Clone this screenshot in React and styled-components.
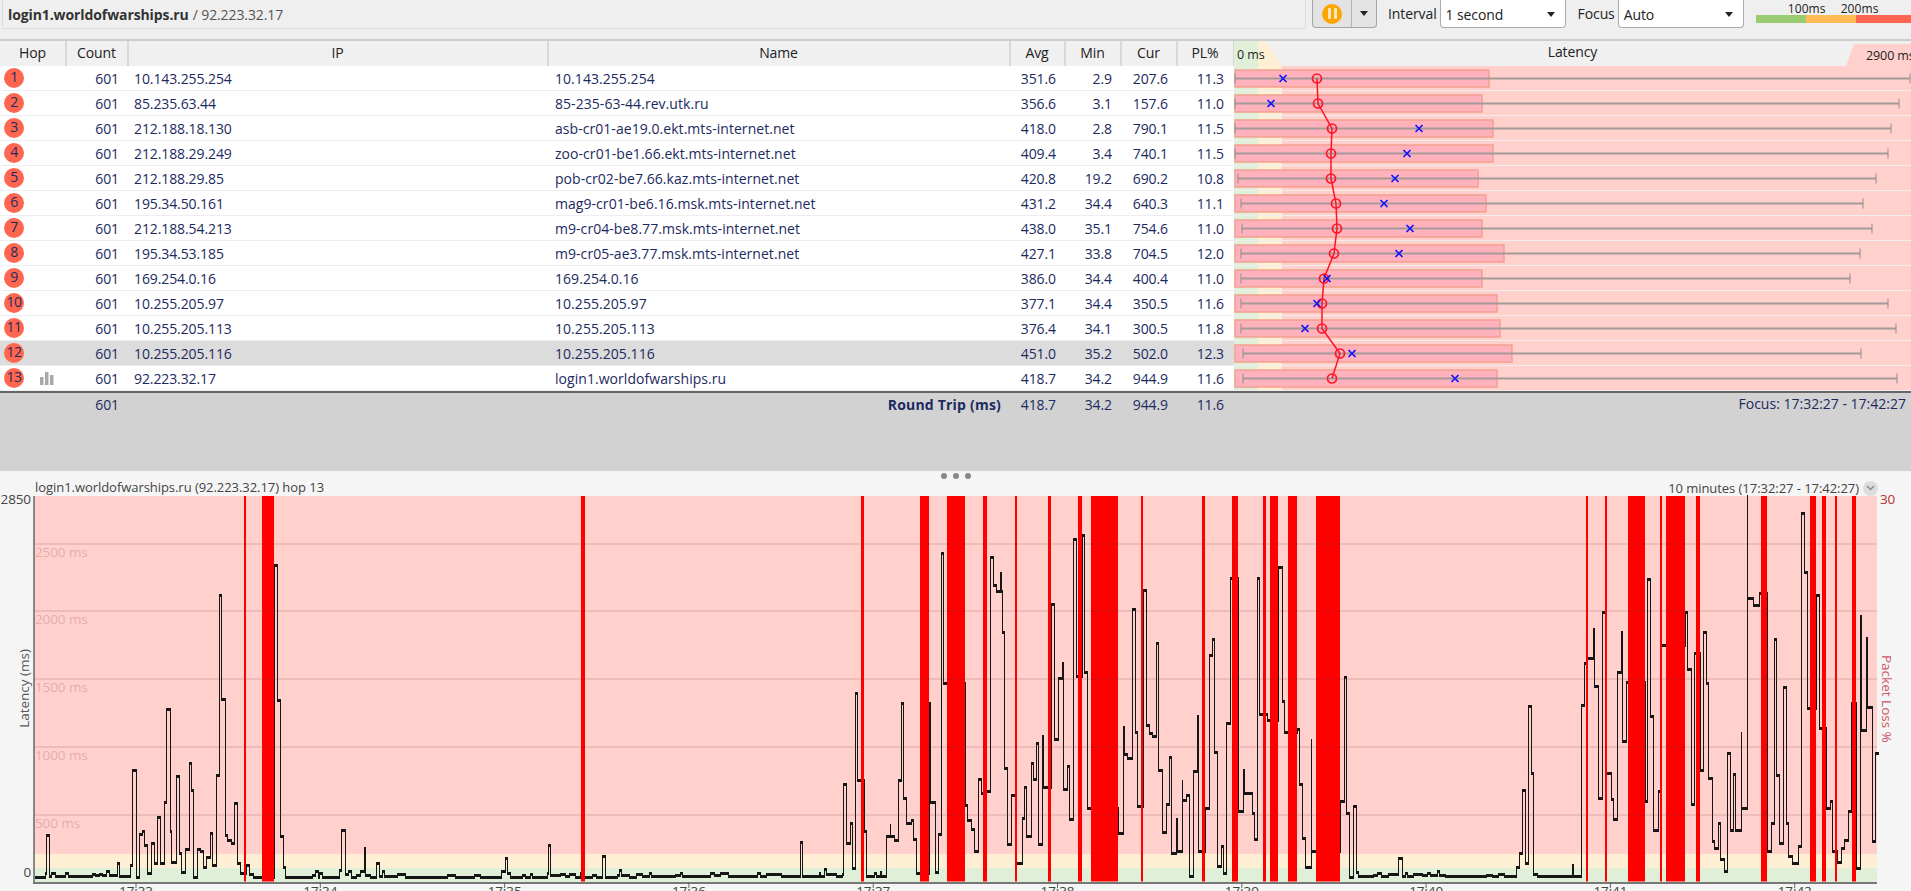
import styled, {createGlobalStyle} from 'styled-components';

const GlobalStyle = createGlobalStyle`
  html, body {
    margin: 0;
    height: 100%;
    overflow: hidden;
    background: #efefef;
  }
  body {
    font-family: "Open Sans", "Liberation Sans", sans-serif;
    font-size: 14px;
    letter-spacing: -0.1px;
  }
`;

const COLS = '66px 62px 420px 462px 55px 56px 56px 57px 1fr';
const PLOT_W = 677;
const CHART_W = 1843;
const CHART_H = 386;

const HOPS = [
  {ip: '10.143.255.254', name: '10.143.255.254', avg: '351.6', min: '2.9', cur: '207.6', pl: '11.3', box: 1489, dot: 1317, x: 1283, lo: 1235, hi: 1910},
  {ip: '85.235.63.44', name: '85-235-63-44.rev.utk.ru', avg: '356.6', min: '3.1', cur: '157.6', pl: '11.0', box: 1482, dot: 1318, x: 1271, lo: 1235, hi: 1899},
  {ip: '212.188.18.130', name: 'asb-cr01-ae19.0.ekt.mts-internet.net', avg: '418.0', min: '2.8', cur: '790.1', pl: '11.5', box: 1493, dot: 1332, x: 1419, lo: 1235, hi: 1891},
  {ip: '212.188.29.249', name: 'zoo-cr01-be1.66.ekt.mts-internet.net', avg: '409.4', min: '3.4', cur: '740.1', pl: '11.5', box: 1493, dot: 1331, x: 1407, lo: 1235, hi: 1888},
  {ip: '212.188.29.85', name: 'pob-cr02-be7.66.kaz.mts-internet.net', avg: '420.8', min: '19.2', cur: '690.2', pl: '10.8', box: 1478, dot: 1331, x: 1395, lo: 1238, hi: 1876},
  {ip: '195.34.50.161', name: 'mag9-cr01-be6.16.msk.mts-internet.net', avg: '431.2', min: '34.4', cur: '640.3', pl: '11.1', box: 1486, dot: 1336, x: 1384, lo: 1241, hi: 1863},
  {ip: '212.188.54.213', name: 'm9-cr04-be8.77.msk.mts-internet.net', avg: '438.0', min: '35.1', cur: '754.6', pl: '11.0', box: 1482, dot: 1337, x: 1410, lo: 1242, hi: 1872},
  {ip: '195.34.53.185', name: 'm9-cr05-ae3.77.msk.mts-internet.net', avg: '427.1', min: '33.8', cur: '704.5', pl: '12.0', box: 1504, dot: 1334, x: 1399, lo: 1241, hi: 1860},
  {ip: '169.254.0.16', name: '169.254.0.16', avg: '386.0', min: '34.4', cur: '400.4', pl: '11.0', box: 1482, dot: 1324, x: 1327, lo: 1241, hi: 1850},
  {ip: '10.255.205.97', name: '10.255.205.97', avg: '377.1', min: '34.4', cur: '350.5', pl: '11.6', box: 1497, dot: 1322, x: 1317, lo: 1241, hi: 1888},
  {ip: '10.255.205.113', name: '10.255.205.113', avg: '376.4', min: '34.1', cur: '300.5', pl: '11.8', box: 1500, dot: 1322, x: 1305, lo: 1241, hi: 1896},
  {ip: '10.255.205.116', name: '10.255.205.116', avg: '451.0', min: '35.2', cur: '502.0', pl: '12.3', box: 1512, dot: 1340, x: 1352, lo: 1243, hi: 1861},
  {ip: '92.223.32.17', name: 'login1.worldofwarships.ru', avg: '418.7', min: '34.2', cur: '944.9', pl: '11.6', box: 1497, dot: 1332, x: 1455, lo: 1243, hi: 1897},
];

// packet loss bars, page x from / to
const LOSS = [
  [244, 246], [262, 274], [581, 585], [861, 864], [920, 929], [947, 965], [983, 987], [1015, 1017],
  [1048, 1051], [1078, 1082], [1091, 1118], [1141, 1143], [1202, 1205], [1232, 1238], [1263, 1266],
  [1270, 1278], [1288, 1297], [1316, 1340], [1586, 1588], [1605, 1607], [1628, 1645], [1660, 1662],
  [1666, 1685], [1696, 1700], [1761, 1767], [1810, 1816], [1822, 1826], [1835, 1837], [1852, 1856],
];

// latency trace read off the capture in three stretches, each with its own x scale
const STRETCHES = [
  {
    scale: 2.529,
    from: 0,
    pts: [
      88, 1190, 115, 1180, 117, 1065, 125, 1188, 130, 1180, 140, 1188, 165, 1180, 172, 1188, 232, 1182, 240, 1186,
      250, 1182, 258, 1186, 268, 1172, 275, 1186, 296, 1150, 301, 1188, 330, 1155, 335, 870, 343, 1190, 352, 1062,
      360, 1052, 365, 1095, 373, 1180, 383, 1090, 390, 1150, 398, 1012, 404, 1150, 415, 965, 421, 687, 429, 1052,
      433, 1145, 446, 888, 452, 1120, 459, 1175, 467, 1108, 478, 850, 483, 930, 488, 1192, 499, 1106, 506, 1112,
      513, 1160, 522, 1132, 532, 1058, 535, 1155, 547, 885, 554, 345, 560, 657, 568, 1065, 575, 1080, 583, 1088,
      593, 970, 599, 1150, 606, 1180, 622, 1155, 630, 1182, 640, 1190, 693, 255, 700, 660, 707, 1068, 715, 1160,
      722, 1190, 790, 1185, 797, 1172, 803, 1190, 808, 1180, 815, 1190, 858, 1170, 863, 1050, 872, 1182, 880, 1172,
      887, 1190, 900, 1185, 910, 1172, 921, 1105, 924, 1185, 935, 1190, 952, 1150, 958, 1188, 965, 1172, 972, 1188,
      1005, 1183, 1025, 1190, 1130, 1186, 1150, 1190, 1200, 1186, 1215, 1190, 1268, 1172, 1278, 1135, 1282, 1180,
      1290, 1190, 1320, 1185, 1328, 1190, 1340, 1182, 1345, 1190, 1383, 1178, 1385, 1094, 1392, 1185, 1417, 1182,
      1428, 1188, 1438, 1182, 1455, 1190, 1468, 1180, 1475, 1190, 1497, 1185, 1507, 1190,
    ],
  },
  {
    scale: 2.376,
    from: 600,
    pts: [
      5, 1127, 13, 1190, 40, 1185, 46, 1170, 49, 1185, 70, 1190, 85, 1182, 100, 1188, 117, 1180, 122, 1188, 178, 1185,
      190, 1178, 195, 1188, 262, 1178, 270, 1185, 285, 1178, 303, 1188, 373, 1180, 380, 1188, 395, 1182, 430, 1188,
      476, 1087, 480, 1188, 520, 1180, 522, 1188, 533, 1168, 538, 1182, 560, 1188, 575, 1182, 577, 912, 584, 1090,
      593, 1028, 598, 1165, 606, 638, 610, 900, 628, 1052, 633, 1188, 652, 1180, 655, 1188, 665, 1175, 668, 1188,
      680, 1068, 688, 1035, 690, 1068, 698, 1080, 708, 900, 716, 670, 720, 955, 728, 1030, 738, 1020, 744, 1078,
      750, 1178, 782, 670, 785, 965, 795, 1175, 803, 1062, 811, 218, 816, 608, 867, 975, 873, 1020, 881, 1048,
      888, 1112, 897, 897, 905, 938, 918, 932, 927, 230, 933, 315, 940, 332, 951, 278, 953, 332, 955, 455, 960, 865,
      968, 1092, 977, 945, 985, 1148, 1002, 1015, 1007, 922, 1013, 1068, 1023, 848, 1028, 897, 1037, 788, 1040, 1092,
      1050, 767, 1053, 920, 1072, 372, 1078, 777, 1088, 595, 1097, 548, 1099, 927, 1110, 857, 1114, 1017, 1125, 178,
      1130, 588, 1146, 165, 1150, 575, 1158, 985, 1231, 1058, 1242, 742, 1245, 822, 1253, 833, 1263, 387, 1270, 755,
      1275, 978, 1290, 330, 1297, 735, 1305, 760, 1312, 768, 1322, 488, 1325, 870, 1335, 1055, 1344, 972, 1352, 832,
      1356, 1118, 1368, 1018, 1370, 1113, 1382, 902, 1384, 960, 1393, 945, 1400, 1188, 1408, 872, 1418, 707, 1420, 1113,
      1438, 983, 1446, 525, 1453, 477, 1458, 815, 1465, 1157, 1475, 1097, 1480, 1178, 1488, 728, 1498, 293, 1516, 993,
      1527, 870, 1531, 940, 1548, 1000, 1553, 1077,
    ],
  },
  {
    scale: 2.337,
    from: 1240,
    pts: [
      40, 295, 44, 703, 62, 720, 89, 262, 97, 662, 103, 755, 133, 748, 138, 912, 146, 1073, 153, 1160, 165, 780,
      167, 1113, 234, 963, 243, 592, 247, 1000, 255, 1190, 263, 977, 270, 1175, 275, 1188, 310, 1185, 320, 1180, 330, 1188,
      345, 1182, 370, 1133, 378, 1188, 385, 1180, 390, 1188, 405, 1182, 425, 1185, 437, 1180, 445, 1184, 460, 1172,
      465, 1185, 480, 1188, 575, 1184, 590, 1188, 603, 1182, 618, 1188, 645, 1160, 652, 1120, 659, 930, 666, 1148,
      672, 678, 680, 880, 684, 1183, 695, 1188, 775, 1155, 778, 1188, 797, 675, 804, 550, 810, 533, 825, 448, 828, 617,
      836, 955, 845, 395, 853, 878, 866, 958, 871, 1017, 882, 575, 890, 457, 892, 782, 903, 607, 946, 963, 952, 298,
      959, 708, 965, 1050, 976, 932, 985, 495, 1040, 397, 1044, 567, 1053, 972, 1061, 520, 1075, 870, 1082, 455,
      1088, 610, 1093, 893, 1102, 1082, 1108, 1103, 1118, 1030, 1122, 1138, 1130, 1172, 1139, 820, 1146, 1050, 1153, 883,
      1157, 1050, 1170, 760, 1172, 985, 1184, 48, 1185, 355, 1200, 375, 1212, 338, 1231, 1113, 1241, 1030, 1248, 478,
      1252, 885, 1260, 1088, 1268, 622, 1275, 1030, 1280, 1128, 1290, 1148, 1303, 1098, 1312, 100, 1318, 275, 1324, 685,
      1347, 345, 1353, 745, 1370, 985, 1378, 962, 1383, 1112, 1395, 1145, 1405, 1105, 1412, 1080, 1420, 992, 1427, 668,
      1440, 1165, 1450, 408, 1452, 750, 1464, 475, 1466, 680, 1476, 1083, 1485, 818, 1490, 818,
    ],
  },
];

const TRACE = STRETCHES.flatMap(({scale, from, pts}) => {
  const out = [];
  for (let i = 0; i < pts.length; i += 2) {
    out.push([Math.round(pts[i] / scale + from - 34) + 0.5, Math.round(pts[i + 1] / 3 - 16)]);
  }
  return out;
});

function tracePaths() {
  let flat = '';
  let steep = '';
  for (let i = 0; i < TRACE.length - 1; i++) {
    const [x, y] = TRACE[i];
    const [nx, ny] = TRACE[i + 1];
    flat += `M${x - 0.5} ${y}H${nx + 0.5}`;
    steep += `M${nx} ${y}V${ny}`;
  }
  return {flat, steep};
}

const GRID = [
  {y: 48, label: '2500 ms'},
  {y: 115, label: '2000 ms'},
  {y: 183, label: '1500 ms'},
  {y: 251, label: '1000 ms'},
  {y: 319, label: '500 ms'},
];

const MINUTES = ['17:33', '17:34', '17:35', '17:36', '17:37', '17:38', '17:39', '17:40', '17:41', '17:42'];

const Page = styled.div`
  width: 1911px;
  height: 891px;
  overflow: hidden;
  display: flex;
  flex-direction: column;
  background: #efefef;
  color: #222;
`;

const Toolbar = styled.div`
  display: flex;
  align-items: stretch;
  height: 29px;
  margin-bottom: 10px;
  flex: none;
`;

const TitleBox = styled.div`
  width: 1304px;
  margin-left: 2px;
  box-sizing: border-box;
  padding-left: 5px;
  display: flex;
  align-items: center;
  gap: 4px;
  border: 1px solid #ddd;
  border-top: none;
  color: #555;

  b {
    color: #333;
    font-weight: 700;
  }
`;

const PauseGroup = styled.div`
  display: flex;
  margin-left: 6px;
  width: 65px;
  height: 28px;
  box-sizing: border-box;
  border: 1px solid #a5a5a5;
  border-top: none;
  border-radius: 0 0 4px 4px;
  background: #e3e3e3;
`;

const PauseButton = styled.div`
  width: 38px;
  display: flex;
  align-items: center;
  justify-content: center;
  border-right: 1px solid #b5b5b5;
`;

const PauseDisc = styled.div`
  width: 20px;
  height: 20px;
  border-radius: 50%;
  background: #ffa500;
  display: flex;
  align-items: center;
  justify-content: center;
  gap: 3px;

  i {
    display: block;
    width: 3px;
    height: 11px;
    border-radius: 1px;
    background: #ffe9c0;
  }
`;

const CaretButton = styled.div`
  flex: 1;
  display: flex;
  align-items: center;
  justify-content: center;
`;

const Caret = styled.span`
  width: 0;
  height: 0;
  border-left: 4px solid transparent;
  border-right: 4px solid transparent;
  border-top: 5px solid #222;
`;

const FieldLabel = styled.span`
  display: flex;
  align-items: center;
  margin: 0 3px 2px ${props => props.$gap}px;
`;

const Dropdown = styled.div`
  width: ${props => props.$width}px;
  height: 28px;
  box-sizing: border-box;
  display: flex;
  align-items: center;
  justify-content: space-between;
  padding: 2px 10px 0 5px;
  background: #fff;
  border: 1px solid #aaa;
  border-top: none;
  border-radius: 0 0 4px 4px;
`;

const Legend = styled.div`
  margin-left: 12px;
  width: 155px;
  display: flex;
  flex-direction: column;
`;

const LegendLabels = styled.div`
  height: 15px;
  font-size: 12px;
  line-height: 17px;
  letter-spacing: 0.1px;
  padding-left: 32px;
  display: flex;
  gap: 15px;
`;

const LegendBar = styled.div`
  height: 8px;
  background: linear-gradient(to right, #99cc70 0 50px, #ffbb55 50px 100px, #ff6650 100px);
`;

const Table = styled.div`
  flex: none;
  border-top: 2px solid #ccc;
`;

const HeadRow = styled.div`
  display: grid;
  grid-template-columns: ${COLS};
  height: 25px;
  background: #f0f0f0;
`;

const HeadCell = styled.div`
  display: flex;
  align-items: center;
  justify-content: center;
  border-right: 2px solid #d8d8d8;
  margin-right: -1px;
  padding-bottom: 3px;
`;

const LatencyHead = styled.div`
  position: relative;
  text-align: center;
  line-height: 21px;
`;

const RangeTag = styled.span`
  position: absolute;
  top: ${props => props.$top}px;
  bottom: 0;
  font-size: 12.5px;
`;

const MinTag = styled(RangeTag)`
  left: 0;
  width: 48px;
  padding-left: 3px;
  box-sizing: border-box;
  text-align: left;
  line-height: 28px;
  background: linear-gradient(to right, #e0f0d8 0 24px, #fdeed4 24px);
  clip-path: polygon(0 0, 32px 0, 100% 100%, 0 100%);
`;

const MaxTag = styled(RangeTag)`
  right: 0;
  width: 65px;
  padding-left: 20px;
  box-sizing: border-box;
  text-align: left;
  white-space: nowrap;
  line-height: 23px;
  background: #ffd0cc;
  clip-path: polygon(8px 0, 100% 0, 100% 100%, 0 100%);
`;

const Body = styled.div`
  position: relative;
`;

const Row = styled.div`
  display: grid;
  grid-template-columns: ${COLS};
  height: 25px;
  box-sizing: border-box;
  border-bottom: 1px solid #eee;
  background: ${props => (props.$active ? '#dcdcdc' : '#fff')};
  color: #1c2a60;
`;

const HopCell = styled.div`
  display: flex;
  align-items: center;
  padding-left: 4px;
  gap: 16px;
`;

const HopBadge = styled.span`
  width: 20px;
  height: 20px;
  border-radius: 50%;
  background: #ff6650;
  display: flex;
  align-items: center;
  justify-content: center;
  letter-spacing: -0.5px;
  padding-bottom: 3px;
  box-sizing: border-box;
`;

const NumCell = styled.div`
  display: flex;
  align-items: center;
  justify-content: flex-end;
  padding-right: ${props => props.$pad || 9}px;
  font-weight: ${props => (props.$bold ? 700 : 400)};
  letter-spacing: ${props => (props.$bold ? '0.2px' : 'inherit')};
`;

const TextCell = styled.div`
  display: flex;
  align-items: center;
  padding-left: ${props => props.$pad}px;
  letter-spacing: ${props => props.$track || 'inherit'};
`;

const Zones = styled.div`
  background: linear-gradient(to right, #e0f0d8 0 24px, #fff0d4 24px 48px, #ffd0cc 48px);
  height: 24px;
`;

const Plot = styled.svg`
  position: absolute;
  top: 0;
  right: 0;
  width: ${PLOT_W}px;
  height: 325px;
  pointer-events: none;
`;

const TotalArea = styled.div`
  flex: none;
  height: 78px;
  border-top: 2px solid #666;
  background: #d2d2d2;
  color: #1c2a60;
`;

const TotalRow = styled.div`
  display: grid;
  grid-template-columns: 66px 62px 882px 55px 56px 56px 57px 1fr;
  height: 22px;
`;

const FocusNote = styled.div`
  text-align: right;
  padding-right: 5px;
  line-height: 21px;
  letter-spacing: 0;
`;

const Lower = styled.div`
  flex: 1;
  background: #f5f5f5;
  display: flex;
  flex-direction: column;
`;

const Handle = styled.div`
  height: 9px;
  padding-top: 1px;
  box-sizing: border-box;
  display: flex;
  justify-content: center;
  align-items: center;
  gap: 6px;

  i {
    width: 6px;
    height: 6px;
    border-radius: 50%;
    background: #888;
  }
`;

const ChartHead = styled.div`
  height: 16px;
  line-height: 15px;
  margin: 0 0 0 35px;
  width: 1842px;
  display: flex;
  justify-content: space-between;
  color: #444;
  font-size: 13px;
  letter-spacing: -0.05px;
`;

const RangePick = styled.div`
  display: flex;
  align-items: center;
  gap: 4px;
`;

const RoundChevron = styled.span`
  width: 15px;
  height: 15px;
  margin-right: -1px;
  border-radius: 50%;
  background: #ddd;
  color: #888;
  display: flex;
  align-items: center;
  justify-content: center;
`;

const ChartRow = styled.div`
  display: grid;
  grid-template-columns: 34px ${CHART_W}px 34px;
`;

const AxisColumn = styled.div`
  height: ${CHART_H}px;
  display: flex;
  flex-direction: column;
  justify-content: space-between;
  align-items: ${props => (props.$right ? 'flex-start' : 'flex-end')};
  padding: ${props => (props.$right ? '0 0 0 3px' : '0 3px 0 0')};
  color: ${props => (props.$right ? '#c03030' : '#444')};
  line-height: 14px;
  font-size: 13.5px;
`;

const AxisTop = styled.span`
  margin-top: -4px;
`;

const AxisTitle = styled.span`
  writing-mode: vertical-rl;
  transform: ${props => (props.$flip ? 'rotate(180deg)' : 'none')};
  color: ${props => props.$color};
  letter-spacing: 0;
  margin-top: ${props => props.$nudge}px;
`;

const Spacer = styled.span`
  height: 14px;
  margin-bottom: ${props => props.$bottom || 0}px;
`;

const ChartSvg = styled.svg`
  display: block;
  overflow: visible;
  width: ${CHART_W}px;
  height: ${CHART_H}px;
  font-family: "Open Sans", "Liberation Sans", sans-serif;
`;

function Dot({cx, cy}) {
  return <circle cx={cx} cy={cy} r="4.5" fill="none" stroke="#ff1424" strokeWidth="1.7" />;
}

function Cross({cx, cy}) {
  return (
    <path
      d={`M${cx - 3.5} ${cy - 3.5}L${cx + 3.5} ${cy + 3.5}M${cx + 3.5} ${cy - 3.5}L${cx - 3.5} ${cy + 3.5}`}
      stroke="#1414ff"
      strokeWidth="1.7"
      fill="none"
    />
  );
}

function LatencyPlot() {
  const left = 1234;
  const centers = HOPS.map((h, i) => [h.dot - left, i * 25 + 12.5]);
  return (
    <Plot viewBox={`0 0 ${PLOT_W} 325`}>
      {HOPS.map((h, i) => (
        <g key={h.ip}>
          <rect x="1" y={i * 25 + 4} width={h.box - left - 1} height="17" fill="#ffb1bc" stroke="#f3a08f" strokeWidth="1.5" />
          <path d={`M${h.lo - left} ${i * 25 + 12.5}H${h.hi - left}`} stroke="#a49a9a" strokeWidth="2" />
          <path d={`M${h.lo - left} ${i * 25 + 7.5}v10M${h.hi - left} ${i * 25 + 7.5}v10`} stroke="#8f8f8f" strokeWidth="1" />
        </g>
      ))}
      <polyline points={centers.map(c => c.join(',')).join(' ')} fill="none" stroke="#ff1424" strokeWidth="1.5" />
      {HOPS.map((h, i) => (
        <g key={h.name + i}>
          <Dot cx={h.dot - left} cy={i * 25 + 12.5} />
          <Cross cx={h.x - left} cy={i * 25 + 12.5} />
        </g>
      ))}
    </Plot>
  );
}

function LatencyChart() {
  const {flat, steep} = tracePaths();
  return (
    <ChartSvg viewBox={`0 0 ${CHART_W} ${CHART_H}`}>
      <rect width={CHART_W} height="358" fill="#ffd0cc" />
      <rect y="358" width={CHART_W} height="14" fill="#fdeed4" />
      <rect y="372" width={CHART_W} height="14" fill="#e0f0d8" />
      <path d={flat} stroke="#161616" strokeWidth="3" fill="none" shapeRendering="crispEdges" />
      <path d={steep} stroke="#161616" strokeWidth="1" fill="none" shapeRendering="crispEdges" />
      {LOSS.map(([a, b]) => (
        <rect key={a} x={a - 34} width={b - a} height="385.5" fill="#ff0000" />
      ))}
      {GRID.map(g => (
        <g key={g.y}>
          <rect y={g.y - 1} width={CHART_W} height="2" fill="rgba(110,50,50,0.12)" />
          <text x="1" y={g.y + 13} fontSize="13.5" fill="rgba(140,70,70,0.27)">
            {g.label}
          </text>
        </g>
      ))}
      <path d={`M0 0V${CHART_H + 1}`} stroke="#666" strokeWidth="1.5" />
      <path d={`M-1 ${CHART_H + 1}H${CHART_W}`} stroke="#777" strokeWidth="2" />
      {MINUTES.map((m, i) => (
        <g key={m}>
          <path d={`M${102 + i * 184.3} ${CHART_H}v6`} stroke="#666" />
          <text x={102 + i * 184.3} y={CHART_H + 14} textAnchor="middle" fontSize="13.5" fill="#3a4a3a">
            {m}
          </text>
        </g>
      ))}
    </ChartSvg>
  );
}

function App() {
  return (
    <Page>
      <GlobalStyle />
      <Toolbar>
        <TitleBox>
          <b>login1.worldofwarships.ru</b> / 92.223.32.17
        </TitleBox>
        <PauseGroup>
          <PauseButton>
            <PauseDisc>
              <i />
              <i />
            </PauseDisc>
          </PauseButton>
          <CaretButton>
            <Caret />
          </CaretButton>
        </PauseGroup>
        <FieldLabel $gap={11}>Interval</FieldLabel>
        <Dropdown $width={126}>
          1 second <Caret />
        </Dropdown>
        <FieldLabel $gap={12}>Focus</FieldLabel>
        <Dropdown $width={126}>
          Auto <Caret />
        </Dropdown>
        <Legend>
          <LegendLabels>
            <span>100ms</span>
            <span>200ms</span>
          </LegendLabels>
          <LegendBar />
        </Legend>
      </Toolbar>

      <Table>
        <HeadRow>
          {['Hop', 'Count', 'IP', 'Name', 'Avg', 'Min', 'Cur', 'PL%'].map(h => (
            <HeadCell key={h}>{h}</HeadCell>
          ))}
          <LatencyHead>
            <MinTag $top={0}>0 ms</MinTag>
            Latency
            <MaxTag $top={3}>2900 ms</MaxTag>
          </LatencyHead>
        </HeadRow>
        <Body>
          {HOPS.map((h, i) => (
            <Row key={h.ip} $active={i === 11}>
              <HopCell>
                <HopBadge>{i + 1}</HopBadge>
                {i === 12 && (
                  <svg width="14" height="13" viewBox="0 0 14 13">
                    <rect x="0" y="5" width="3.5" height="8" fill="#a8a8a8" />
                    <rect x="5" y="0" width="3.5" height="13" fill="#a8a8a8" />
                    <rect x="10" y="3" width="3.5" height="10" fill="#a8a8a8" />
                  </svg>
                )}
              </HopCell>
              <NumCell>601</NumCell>
              <TextCell $pad={6}>{h.ip}</TextCell>
              <TextCell $pad={7} $track="0.05px">
                {h.name}
              </TextCell>
              <NumCell>{h.avg}</NumCell>
              <NumCell>{h.min}</NumCell>
              <NumCell>{h.cur}</NumCell>
              <NumCell $pad={10}>{h.pl}</NumCell>
              <Zones />
            </Row>
          ))}
          <LatencyPlot />
        </Body>
      </Table>

      <TotalArea>
        <TotalRow>
          <span />
          <NumCell>601</NumCell>
          <NumCell $bold>Round Trip (ms)</NumCell>
          <NumCell>418.7</NumCell>
          <NumCell>34.2</NumCell>
          <NumCell>944.9</NumCell>
          <NumCell $pad={10}>11.6</NumCell>
          <FocusNote>Focus: 17:32:27 - 17:42:27</FocusNote>
        </TotalRow>
      </TotalArea>

      <Lower>
        <Handle>
          <i />
          <i />
          <i />
        </Handle>
        <ChartHead>
          <span>login1.worldofwarships.ru (92.223.32.17) hop 13</span>
          <RangePick>
            10 minutes (17:32:27 - 17:42:27)
            <RoundChevron>
              <svg width="9" height="6" viewBox="0 0 9 6">
                <path d="M1 1l3.5 3.5L8 1" fill="none" stroke="#888" strokeWidth="1.5" />
              </svg>
            </RoundChevron>
          </RangePick>
        </ChartHead>
        <ChartRow>
          <AxisColumn>
            <AxisTop>2850</AxisTop>
            <AxisTitle $flip $nudge={5} $color="#555">
              Latency (ms)
            </AxisTitle>
            <Spacer $bottom={3}>0</Spacer>
          </AxisColumn>
          <LatencyChart />
          <AxisColumn $right>
            <AxisTop>30</AxisTop>
            <AxisTitle $nudge={24} $color="#d0566a">
              Packet Loss %
            </AxisTitle>
            <Spacer />
          </AxisColumn>
        </ChartRow>
      </Lower>
    </Page>
  );
}

export default App;
